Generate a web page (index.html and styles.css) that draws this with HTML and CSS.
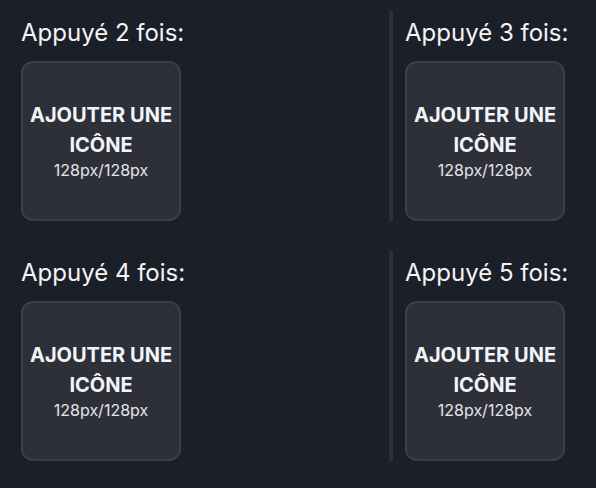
FILE: index.html
```html
<!DOCTYPE html>
<html lang="fr">

<head>
  <meta charset="UTF-8">
  <meta name="viewport" content="width=device-width, initial-scale=1.0">
  <title>Icônes</title>
  <link rel="stylesheet" href="styles.css">
</head>

<body>
  <div class="grid">
    <div class="cell">
      <div class="label">Appuyé 2 fois:</div>
      <button class="icon-slot">
        <span class="slot-title">AJOUTER UNE ICÔNE</span>
        <span class="slot-size">128px/128px</span>
      </button>
    </div>
    <div class="cell divided">
      <div class="label">Appuyé 3 fois:</div>
      <button class="icon-slot">
        <span class="slot-title">AJOUTER UNE ICÔNE</span>
        <span class="slot-size">128px/128px</span>
      </button>
    </div>
    <div class="cell">
      <div class="label">Appuyé 4 fois:</div>
      <button class="icon-slot">
        <span class="slot-title">AJOUTER UNE ICÔNE</span>
        <span class="slot-size">128px/128px</span>
      </button>
    </div>
    <div class="cell divided">
      <div class="label">Appuyé 5 fois:</div>
      <button class="icon-slot">
        <span class="slot-title">AJOUTER UNE ICÔNE</span>
        <span class="slot-size">128px/128px</span>
      </button>
    </div>
  </div>
</body>

</html>
```

FILE: styles.css
```css
:root {
  --bg: #1b1f28;
  --slot: #2e3039;
  --slot-border: #3b3e48;
  --divider: #2b2f39;
  --text: #f4f4f6;
  --text-muted: #e4e5ea;
}

* {
  margin: 0;
  padding: 0;
  box-sizing: border-box;
}

body {
  background: var(--bg);
  color: var(--text);
  font-family: 'Inter', 'Noto Sans', sans-serif;
  padding-top: 11px;
  min-height: 100vh;
}

.grid {
  display: grid;
  grid-template-columns: 389px 1fr;
  row-gap: 30px;
}

.cell {
  padding: 7px 0 0 21px;
}

.cell.divided {
  border-left: 4px solid var(--divider);
  padding-left: 12px;
}

.label {
  font-size: 24px;
  line-height: 30px;
  margin-bottom: 13px;
  color: var(--text);
}

.icon-slot {
  width: 160px;
  height: 160px;
  background: var(--slot);
  border: 2px solid var(--slot-border);
  border-radius: 12px;
  display: flex;
  flex-direction: column;
  align-items: center;
  justify-content: center;
  text-align: center;
  font-family: inherit;
  color: var(--text);
  cursor: pointer;
  padding: 0 4px 2px;
}

.slot-title {
  font-size: 20px;
  font-weight: 700;
  line-height: 30px;
}

.slot-size {
  font-size: 16px;
  line-height: 21px;
  color: var(--text-muted);
}
```
